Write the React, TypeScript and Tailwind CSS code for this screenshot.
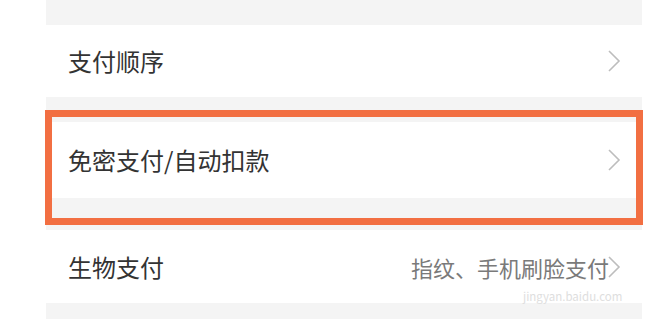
const font = { fontFamily: '"Noto Sans CJK SC", "Noto Sans", sans-serif' };

function Chevron() {
  return (
    <svg className="h-[24px] w-[14px] shrink-0" viewBox="0 0 14 24" fill="none" stroke="#bdbdbd" strokeWidth={1.6}>
      <path d="M2 2l10 10L2 22" />
    </svg>
  );
}

function Row({ label, value, h }: { label: string; value?: string; h: string }) {
  return (
    <div className={`flex items-center justify-between bg-white pl-[22px] pr-[21px] ${h}`}>
      <span className="text-[24px] leading-none text-[#333]">{label}</span>
      <div className="flex items-center">
        {value && <span className="mr-[-2px] text-[22px] leading-none text-[#7a7a7a]">{value}</span>}
        <Chevron />
      </div>
    </div>
  );
}

export default function App() {
  return (
    <div className="relative h-[319px] w-[656px] overflow-hidden bg-white" style={font}>
      <div className="ml-[46px] flex h-[319px] w-[596px] flex-col bg-[#f4f4f4]">
        <div className="h-[25px]" />
        <Row label="支付顺序" h="h-[72px]" />
        <div className="h-[25px]" />
        <Row label="免密支付/自动扣款" h="h-[76px]" />
        <div className="h-[32px]" />
        <Row label="生物支付" value="指纹、手机刷脸支付" h="h-[73px]" />
      </div>

      {/* orange highlight annotation */}
      <div className="absolute left-[45px] top-[110px] h-[115px] w-[598px] border-[7px] border-[#f26f42]" />

      {/* watermark */}
      <div className="absolute left-[523px] top-[291px] text-[11.5px] leading-none text-[#dedede]">
        jingyan.baidu.com
      </div>
    </div>
  );
}
